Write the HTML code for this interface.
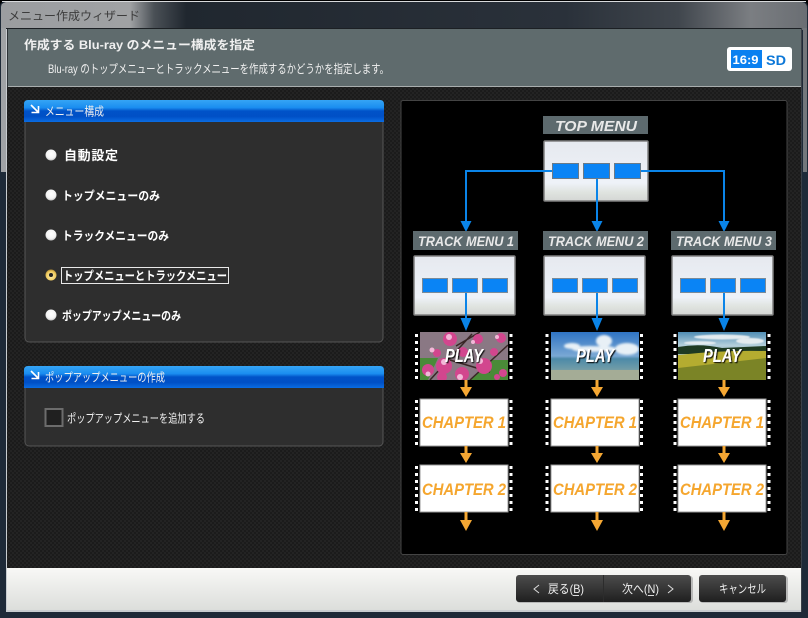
<!DOCTYPE html>
<html lang="ja"><head><meta charset="utf-8"><title>メニュー作成ウィザード</title>
<style>
html,body{margin:0;padding:0;background:#000;width:808px;height:618px;overflow:hidden}
svg{display:block}
text{font-family:"Liberation Sans","Noto Sans CJK JP",sans-serif}
.j{font-size:12px;fill:#f0f0f0}
.b{font-weight:700}
.l{font-size:15px;font-weight:700;font-style:italic;fill:#e8e8e8}
.c{font-size:17px;font-weight:700;font-style:italic;fill:#f5a62e}
.p{font-size:18px;font-style:italic;font-weight:700;fill:#fff;filter:url(#sh)}
</style></head><body>
<svg width="808" height="618" viewBox="0 0 808 618" xmlns="http://www.w3.org/2000/svg">
<defs>
<linearGradient id="tb" x1="0" x2="1" y1="0" y2="0"><stop offset="0" stop-color="#9b9da0"/><stop offset=".16" stop-color="#a0a2a4"/><stop offset=".19" stop-color="#4a5056"/><stop offset=".23" stop-color="#20272f"/><stop offset=".7" stop-color="#2a313a"/><stop offset=".84" stop-color="#40464d"/><stop offset=".93" stop-color="#7b7e82"/><stop offset="1" stop-color="#6a6e73"/></linearGradient>
<linearGradient id="bh" x1="0" x2="0" y1="0" y2="1"><stop offset="0" stop-color="#35a4f5"/><stop offset=".35" stop-color="#1a8df0"/><stop offset=".5" stop-color="#0052c8"/><stop offset=".75" stop-color="#0050c6"/><stop offset="1" stop-color="#0a6ce2"/></linearGradient>
<linearGradient id="bot" x1="0" x2="0" y1="0" y2="1"><stop offset="0" stop-color="#f8f8f6"/><stop offset="1" stop-color="#dcdedb"/></linearGradient>
<linearGradient id="btn" x1="0" x2="0" y1="0" y2="1"><stop offset="0" stop-color="#4c4c4c"/><stop offset=".5" stop-color="#363636"/><stop offset="1" stop-color="#1f1f1f"/></linearGradient>
<linearGradient id="mb" x1="0" x2="0" y1="0" y2="1"><stop offset="0" stop-color="#e6e9ef"/><stop offset=".7" stop-color="#eef2f8"/><stop offset=".85" stop-color="#e0e4e0"/><stop offset="1" stop-color="#d4d6d4"/></linearGradient>
<radialGradient id="rw" cx=".5" cy=".4" r=".6"><stop offset="0" stop-color="#fff"/><stop offset=".7" stop-color="#f4f4f4"/><stop offset="1" stop-color="#c4c4c4"/></radialGradient>
<radialGradient id="ry" cx=".5" cy=".6" r=".6"><stop offset="0" stop-color="#fff0b0"/><stop offset=".7" stop-color="#f0cc60"/><stop offset="1" stop-color="#b08a30"/></radialGradient>
<pattern id="chk" width="4" height="4" patternUnits="userSpaceOnUse"><rect width="4" height="4" fill="#1b1b1b"/><rect width="2" height="2" fill="#232323"/><rect x="2" y="2" width="2" height="2" fill="#232323"/></pattern>
<linearGradient id="sky" x1="0" x2="0" y1="0" y2="1"><stop offset="0" stop-color="#2f74c4"/><stop offset=".5" stop-color="#7aa8d4"/><stop offset=".56" stop-color="#4d8aa8"/><stop offset=".75" stop-color="#6c9aa8"/><stop offset="1" stop-color="#a8b49c"/></linearGradient>
<linearGradient id="fld" x1="0" x2="0" y1="0" y2="1"><stop offset="0" stop-color="#4f8cb4"/><stop offset=".28" stop-color="#b4d0dc"/><stop offset=".34" stop-color="#a4c0c8"/><stop offset="1" stop-color="#a4c0c8"/></linearGradient>
<filter id="sh" x="-20%" y="-20%" width="140%" height="140%"><feDropShadow dx="1" dy="1" stdDeviation=".6" flood-color="#000" flood-opacity="1"/></filter>
<filter id="bl" x="-20%" y="-20%" width="140%" height="140%"><feGaussianBlur stdDeviation=".5"/></filter>
<filter id="bl2" x="-20%" y="-20%" width="140%" height="140%"><feGaussianBlur stdDeviation="1"/></filter>
<clipPath id="c1"><rect x="420" y="332" width="88" height="48"/></clipPath>
<clipPath id="c2"><rect x="551" y="332" width="88" height="48"/></clipPath>
<clipPath id="c3"><rect x="678" y="332" width="88" height="48"/></clipPath>
</defs>

<!-- frame -->
<rect width="808" height="618" fill="#000"/>
<path d="M0 618V6Q0 2 6 1H802Q808 2 808 8V618Z" fill="#1e2a38"/>
<path d="M1 30V7Q1 3 6 2H802Q807 3 807 8V30Z" fill="url(#tb)"/>
<rect x="2" y="1" width="804" height="1" fill="#d8dadc"/>
<rect x="1" y="28" width="5" height="144" fill="#a0a3a6"/>
<rect x="803" y="28" width="4" height="144" fill="#73777b"/>
<rect x="6" y="28" width="796" height="584" fill="#c8ccd0"/>
<rect x="6" y="28" width="796" height="1" fill="#1c2024"/>
<rect x="801" y="28" width="1" height="584" fill="#3a4048"/>
<!-- title -->
<text x="8" y="20" class="j" style="fill:#3c3c3c;font-size:12px" textLength="132" lengthAdjust="spacingAndGlyphs">メニュー作成ウィザード</text>

<!-- header -->
<rect x="7" y="29" width="794" height="58" fill="#5f6b6d"/>
<rect x="7" y="29" width="1" height="58" fill="#2c3236"/>
<rect x="8" y="86" width="793" height="1" fill="#a9aeae"/>
<text x="24" y="49" class="j b" textLength="231" lengthAdjust="spacingAndGlyphs">作成する Blu-ray のメニュー構成を指定</text>
<text x="48" y="73" class="j" textLength="341" lengthAdjust="spacingAndGlyphs">Blu-ray のトップメニューとトラックメニューを作成するかどうかを指定します。</text>
<!-- badge -->
<rect x="727" y="47" width="65" height="24" rx="3" fill="#fff"/>
<rect x="731" y="50" width="31" height="18" fill="#0a80f0"/>
<text x="732.500" y="64" font-size="12" font-weight="700" fill="#fff" textLength="26" lengthAdjust="spacingAndGlyphs">16:9</text>
<text x="766" y="65" font-size="14" font-weight="700" fill="#0d78d8" textLength="20" lengthAdjust="spacingAndGlyphs">SD</text>

<!-- content bg -->
<rect x="7" y="87" width="794" height="481" fill="url(#chk)"/>

<!-- panel 1 -->
<rect x="25" y="112" width="358" height="230" rx="4" fill="#2e2e2e" stroke="#555"/>
<path d="M24 122V104Q24 100 28 100H380Q384 100 384 104V122Z" fill="url(#bh)"/>
<path d="M31 106L38 113M38.500 107V113.500H31.500" fill="none" stroke="#fff" stroke-width="1.600" transform="translate(0,-1)"/>
<text x="45" y="115.500" class="j" textLength="59" lengthAdjust="spacingAndGlyphs">メニュー構成</text>

<circle cx="51" cy="155" r="5.500" fill="url(#rw)"/>
<circle cx="51" cy="195" r="5.500" fill="url(#rw)"/>
<circle cx="51" cy="235" r="5.500" fill="url(#rw)"/>
<circle cx="51" cy="275" r="5.500" fill="url(#ry)"/>
<circle cx="51" cy="275" r="2" fill="#222"/>
<circle cx="51" cy="315" r="5.500" fill="url(#rw)"/>
<text x="64" y="160" class="j b" style="font-size:13px;fill:#fff" textLength="54" lengthAdjust="spacing">自動設定</text>
<text x="62" y="200" class="j b" style="fill:#fff" textLength="98" lengthAdjust="spacingAndGlyphs">トップメニューのみ</text>
<text x="62" y="240" class="j b" style="fill:#fff" textLength="107" lengthAdjust="spacingAndGlyphs">トラックメニューのみ</text>
<rect x="61.500" y="267.500" width="167" height="16" fill="none" stroke="#e8e8e8"/>
<text x="63" y="280" class="j b" style="fill:#fff" textLength="164" lengthAdjust="spacingAndGlyphs">トップメニューとトラックメニュー</text>
<text x="62" y="320" class="j b" style="fill:#fff" textLength="119" lengthAdjust="spacingAndGlyphs">ポップアップメニューのみ</text>

<!-- panel 2 -->
<rect x="25" y="378" width="358" height="68" rx="4" fill="#2e2e2e" stroke="#555"/>
<path d="M24 388V370Q24 366 28 366H380Q384 366 384 370V388Z" fill="url(#bh)"/>
<path d="M31 372L38 379M38.500 373V379.500H31.500" fill="none" stroke="#fff" stroke-width="1.600" transform="translate(0,-1)"/>
<text x="45" y="381.500" class="j" textLength="120" lengthAdjust="spacingAndGlyphs">ポップアップメニューの作成</text>
<rect x="45.500" y="409" width="17" height="17" fill="#202020" stroke="#6c6c6c" stroke-width="2"/>
<text x="67" y="422.500" class="j" textLength="138" lengthAdjust="spacingAndGlyphs">ポップアップメニューを追加する</text>

<!-- diagram panel -->
<rect x="401" y="100.500" width="386" height="454" rx="2" fill="#000" stroke="#444"/>

<!-- top menu -->
<rect x="543" y="116" width="105" height="18" fill="#5d6a6e"/>
<text x="555" y="131" class="l" textLength="82" lengthAdjust="spacingAndGlyphs">TOP MENU</text>
<rect x="544" y="141" width="104" height="60" rx="1" fill="url(#mb)" stroke="#808080" stroke-width="1.500"/>
<path d="M552 171H466V222M641 171H724V222M597 179V222" fill="none" stroke="#0a84e8" stroke-width="2"/>
<g fill="#0a84f5" stroke="#6a7a88"><rect x="552.500" y="163.500" width="26" height="15"/><rect x="583.500" y="163.500" width="26" height="15"/><rect x="614.500" y="163.500" width="26" height="15"/></g>
<g fill="#0a84e8"><path d="M460.500 221H471.500L466 232Z"/><path d="M591.500 221H602.500L597 232Z"/><path d="M718.500 221H729.500L724 232Z"/></g>

<!-- track labels -->
<rect x="413" y="231" width="105" height="19" fill="#5d6a6e"/>
<rect x="543" y="231" width="105" height="19" fill="#5d6a6e"/>
<rect x="671" y="231" width="105" height="19" fill="#5d6a6e"/>
<text x="418" y="246" class="l" style="font-size:14px" textLength="96" lengthAdjust="spacingAndGlyphs">TRACK MENU 1</text>
<text x="548" y="246" class="l" style="font-size:14px" textLength="96" lengthAdjust="spacingAndGlyphs">TRACK MENU 2</text>
<text x="676" y="246" class="l" style="font-size:14px" textLength="96" lengthAdjust="spacingAndGlyphs">TRACK MENU 3</text>

<!-- track boxes -->
<rect x="414" y="256" width="101" height="59" rx="1" fill="url(#mb)" stroke="#808080" stroke-width="1.500"/>
<rect x="544" y="256" width="101" height="59" rx="1" fill="url(#mb)" stroke="#808080" stroke-width="1.500"/>
<rect x="672" y="256" width="101" height="59" rx="1" fill="url(#mb)" stroke="#808080" stroke-width="1.500"/>
<g fill="#0a84f5" stroke="#7a8a98">
<rect x="422.500" y="278.500" width="25" height="14"/><rect x="452.500" y="278.500" width="25" height="14"/><rect x="482.500" y="278.500" width="25" height="14"/>
<rect x="552.500" y="278.500" width="25" height="14"/><rect x="582.500" y="278.500" width="25" height="14"/><rect x="612.500" y="278.500" width="25" height="14"/>
<rect x="680.500" y="278.500" width="25" height="14"/><rect x="710.500" y="278.500" width="25" height="14"/><rect x="740.500" y="278.500" width="25" height="14"/>
</g>
<path d="M466 293V320M597 293V320M724 293V320" stroke="#0a84e8" stroke-width="2" fill="none"/>
<g fill="#0a84e8"><path d="M460.500 318H471.500L466 331Z"/><path d="M591.500 318H602.500L597 331Z"/><path d="M718.500 318H729.500L724 331Z"/></g>

<!-- thumb 1: blossoms -->
<g clip-path="url(#c1)">
<rect x="420" y="332" width="88" height="48" fill="#8a7884"/>
<path d="M420 358H438L428 380H420ZM470 380L492 360H508V380Z" fill="#4a8a38"/>
<g stroke="#3a2626" stroke-width="1.500" fill="none"><path d="M430 380L472 334M470 380L508 345M450 360L490 372M456 346L480 332"/></g>
<g fill="#d2468e">
<circle cx="450" cy="339" r="7"/><circle cx="428" cy="370" r="6"/><circle cx="444" cy="366" r="8"/><circle cx="437" cy="353" r="4"/><circle cx="462" cy="374" r="7"/><circle cx="484" cy="366" r="8"/><circle cx="478" cy="339" r="5"/><circle cx="501" cy="338" r="5"/><circle cx="494" cy="352" r="4"/><circle cx="463" cy="352" r="5"/><circle cx="503" cy="373" r="4"/><circle cx="442" cy="377" r="5"/><circle cx="497" cy="377" r="3"/>
</g>
<g fill="#f2b8d8"><circle cx="449" cy="337" r="3"/><circle cx="444" cy="362" r="3"/><circle cx="428" cy="374" r="2.500"/><circle cx="480" cy="361" r="3"/><circle cx="497" cy="337" r="2"/><circle cx="460" cy="377" r="3"/><circle cx="432" cy="350" r="2.500"/><circle cx="473" cy="342" r="2"/></g>
</g>
<!-- thumb 2: beach -->
<g clip-path="url(#c2)">
<rect x="551" y="332" width="88" height="48" fill="url(#sky)"/>
<g fill="#e8f0f6" filter="url(#bl2)"><ellipse cx="604" cy="341" rx="8" ry="6"/><ellipse cx="590" cy="349" rx="18" ry="3"/><ellipse cx="627" cy="349" rx="12" ry="6"/><ellipse cx="572" cy="346" rx="8" ry="3"/><ellipse cx="604" cy="349" rx="12" ry="3"/></g>
<rect x="551" y="370" width="88" height="10" fill="#a4ac96"/>
</g>
<!-- thumb 3: field -->
<g clip-path="url(#c3)">
<rect x="678" y="332" width="88" height="48" fill="url(#fld)"/>
<g fill="#e4ecf0" filter="url(#bl)"><ellipse cx="722" cy="337" rx="28" ry="2.500"/><ellipse cx="750" cy="341" rx="14" ry="3"/><ellipse cx="700" cy="343" rx="16" ry="1.800"/></g>
<path d="M678 347Q700 343 722 348L766 346V354H678Z" fill="#1e3a22"/>
<path d="M678 355Q720 350 766 351V380H678Z" fill="#b4ac30"/>
<path d="M678 368L766 358V380H678Z" fill="#7b8426"/>
</g>
<text x="445" y="362" class="p" textLength="38" lengthAdjust="spacingAndGlyphs">PLAY</text>
<text x="576" y="362" class="p" textLength="38" lengthAdjust="spacingAndGlyphs">PLAY</text>
<text x="703" y="362" class="p" textLength="38" lengthAdjust="spacingAndGlyphs">PLAY</text>

<!-- chapters -->
<g fill="#fff" stroke="#999" stroke-width="1">
<rect x="420" y="399" width="88" height="47"/><rect x="551" y="399" width="88" height="47"/><rect x="678" y="399" width="88" height="47"/>
<rect x="420" y="465" width="88" height="47"/><rect x="551" y="465" width="88" height="47"/><rect x="678" y="465" width="88" height="47"/>
</g>
<text x="422" y="428" class="c" textLength="84" lengthAdjust="spacingAndGlyphs">CHAPTER 1</text>
<text x="553" y="428" class="c" textLength="84" lengthAdjust="spacingAndGlyphs">CHAPTER 1</text>
<text x="680" y="428" class="c" textLength="84" lengthAdjust="spacingAndGlyphs">CHAPTER 1</text>
<text x="422" y="495" class="c" textLength="84" lengthAdjust="spacingAndGlyphs">CHAPTER 2</text>
<text x="553" y="495" class="c" textLength="84" lengthAdjust="spacingAndGlyphs">CHAPTER 2</text>
<text x="680" y="495" class="c" textLength="84" lengthAdjust="spacingAndGlyphs">CHAPTER 2</text>

<!-- sprockets -->
<g stroke="#fff" stroke-width="3" stroke-dasharray="3 4" fill="none">
<path d="M416.500 334V380M511 334V380M547 334V380M641.500 334V380M675 334V380M769 334V380"/>
<path d="M416.500 400V446M511 400V446M547 400V446M641.500 400V446M675 400V446M769 400V446"/>
<path d="M416.500 466V512M511 466V512M547 466V512M641.500 466V512M675 466V512M769 466V512"/>
</g>

<!-- orange arrows -->
<path d="M466 380V390M597 380V390M724 380V390M466 446V456M597 446V456M724 446V456M466 512V522M597 512V522M724 512V522" stroke="#f5a733" stroke-width="3" fill="none"/>
<g fill="#f5a733">
<path d="M460 387H472L466 397Z"/><path d="M591 387H603L597 397Z"/><path d="M718 387H730L724 397Z"/>
<path d="M460 453H472L466 463Z"/><path d="M591 453H603L597 463Z"/><path d="M718 453H730L724 463Z"/>
<path d="M460 520H472L466 531Z"/><path d="M591 520H603L597 531Z"/><path d="M718 520H730L724 531Z"/>
</g>

<!-- bottom -->
<rect x="7" y="568" width="794" height="42" fill="url(#bot)"/>
<rect x="517" y="576" width="176" height="27" rx="3" fill="#999" opacity=".6"/>
<rect x="700" y="576" width="88" height="27" rx="3" fill="#999" opacity=".6"/>
<rect x="516" y="575" width="175" height="27" rx="3" fill="url(#btn)"/>
<rect x="603" y="575" width="1" height="27" fill="#2c2c2c"/>
<rect x="699" y="575" width="87" height="27" rx="3" fill="url(#btn)"/>
<path d="M539 585L534 589L539 593" fill="none" stroke="#ddd"/>
<text x="548" y="593" class="j" style="font-size:12px" textLength="36" lengthAdjust="spacingAndGlyphs">戻る(B)</text>
<rect x="573" y="595" width="6" height="1" fill="#ddd"/>
<text x="622" y="593" class="j" style="font-size:12px" textLength="37" lengthAdjust="spacingAndGlyphs">次へ(N)</text>
<rect x="648" y="595" width="6" height="1" fill="#ddd"/>
<path d="M668 585L673 589L668 593" fill="none" stroke="#ddd"/>
<text x="719" y="593" class="j" style="font-size:12px" textLength="47" lengthAdjust="spacingAndGlyphs">キャンセル</text>
</svg>
</body></html>
